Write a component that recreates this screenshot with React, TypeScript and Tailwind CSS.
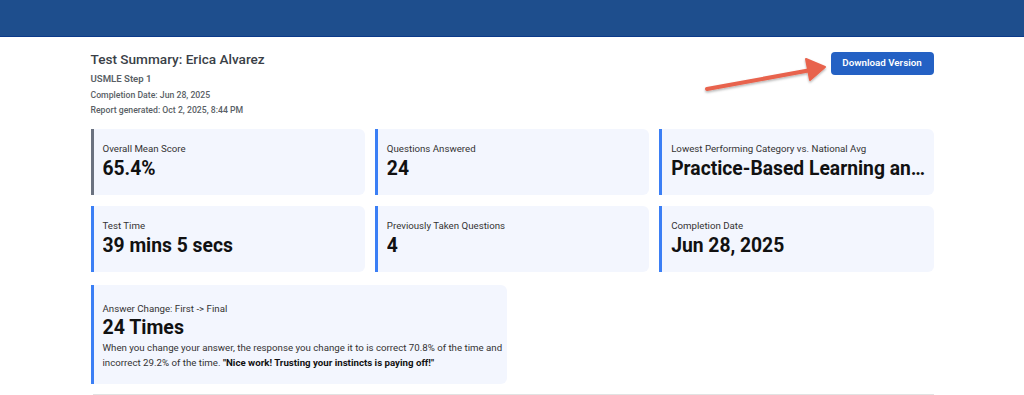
const stats = [
  { label: "Overall Mean Score", value: "65.4%", border: "border-[#6b7280]" },
  { label: "Questions Answered", value: "24", border: "border-[#3b7ff5]" },
  { label: "Lowest Performing Category vs. National Avg", value: "Practice-Based Learning and Improvement", border: "border-[#3b7ff5]" },
  { label: "Test Time", value: "39 mins 5 secs", border: "border-[#3b7ff5]" },
  { label: "Previously Taken Questions", value: "4", border: "border-[#3b7ff5]" },
  { label: "Completion Date", value: "Jun 28, 2025", border: "border-[#3b7ff5]" },
];

const StatCard = ({ label, value, border }: { label: string; value: string; border: string }) => (
  <div className={`min-w-0 h-[66px] rounded-r-md bg-[#f3f6fe] border-l-[3px] ${border} pl-[9px] pr-[6px] pt-[13px]`}>
    <div className="text-[9.7px] leading-[14px] text-[#333]">{label}</div>
    <div className="truncate text-[19.3px] leading-[26px] font-bold text-[#111]">{value}</div>
  </div>
);

const Arrow = () => (
  <svg className="absolute left-[700px] top-[54px]" width="135" height="45" viewBox="0 0 135 45">
    <defs>
      <filter id="sh" x="-20%" y="-50%" width="140%" height="200%">
        <feDropShadow dx="0" dy="1.5" stdDeviation="1.2" floodColor="#000" floodOpacity="0.3" />
      </filter>
    </defs>
    <g filter="url(#sh)" fill="#e8634d" stroke="#e8634d" strokeLinecap="round" strokeLinejoin="round">
      <line x1="7" y1="35" x2="111" y2="16" strokeWidth="4" />
      <polygon points="125,13 106,5 110,26" strokeWidth="2" />
    </g>
  </svg>
);

export default function App() {
  return (
    <div className="relative min-h-screen bg-white font-['Roboto',sans-serif]">
      <div className="h-[37px] bg-[#1e4e8d] border-b border-[#0b3a8a]" />
      <div className="mx-auto w-[843px] pt-[12px]">
        <div className="flex items-start justify-between">
          <div>
            <div className="text-[13.6px] leading-[20px] font-medium text-[#3a3f47]">Test Summary: Erica Alvarez</div>
            <div className="mt-[3px] text-[9.6px] leading-[14px] font-semibold text-[#5a5f66]">USMLE Step 1</div>
            <div className="mt-[2px] text-[8.7px] leading-[14px] font-medium text-[#5a5f66]">Completion Date: Jun 28, 2025</div>
            <div className="mt-[1px] text-[8.7px] leading-[14px] font-medium text-[#5a5f66]">Report generated: Oct 2, 2025, 8:44 PM</div>
          </div>
          <button className="mt-[3px] h-[23px] w-[103px] rounded-[4px] bg-[#2461c4] text-[9.8px] font-semibold text-white">
            Download Version
          </button>
        </div>

        <div className="mt-[12px] grid grid-cols-3 gap-x-[10px] gap-y-[11px]">
          {stats.map((s) => (
            <StatCard key={s.label} {...s} />
          ))}
        </div>

        <div className="mt-[13px] grid grid-cols-2 gap-x-[10px]">
          <div className="h-[99px] rounded-r-md bg-[#f3f6fe] border-l-[3px] border-[#3b7ff5] pl-[9px] pr-1 pt-[17px]">
            <div className="text-[9.7px] leading-[14px] text-[#333]">Answer Change: First -&gt; Final</div>
            <div className="text-[19.5px] leading-[24px] font-bold text-[#111]">24 Times</div>
            <div className="text-[9.7px] leading-[15px] text-[#333]">
              When you change your answer, the response you change it to is correct 70.8% of the time and incorrect 29.2% of the time.{" "}
              <span className="font-bold text-[#111]">"Nice work! Trusting your instincts is paying off!"</span>
            </div>
          </div>
        </div>

        <div className="mt-[10px] ml-[2px] border-t border-[#e2e2e2]" />
      </div>
      <Arrow />
    </div>
  );
}
